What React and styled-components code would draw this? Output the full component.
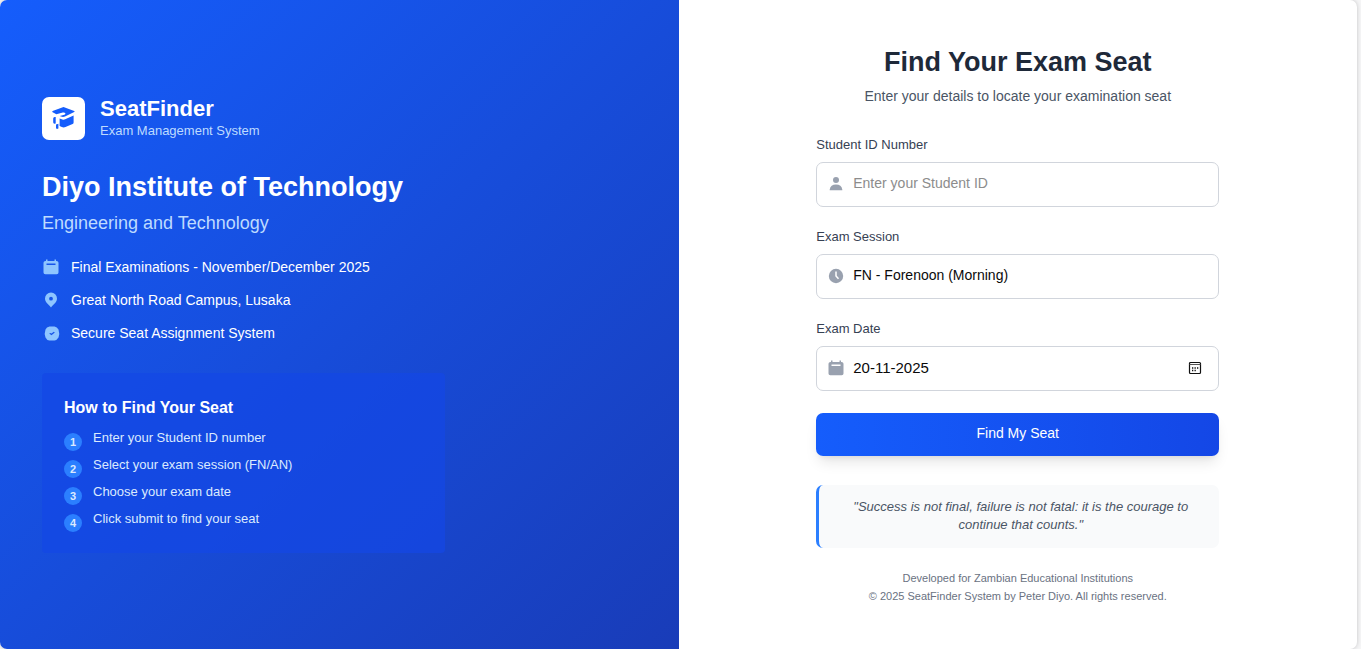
import React from "react";
import styled, { createGlobalStyle } from "styled-components";

const GlobalStyle = createGlobalStyle`
  *, *::before, *::after { box-sizing: border-box; }
  body {
    margin: 0;
    background: #f5f5f6;
    font-family: "Liberation Sans", Arial, sans-serif;
  }
  h1, h2, h3, p, ul, ol { margin: 0; padding: 0; }
  ul, ol { list-style: none; }
  button, input, select { font-family: inherit; }
`;

const Page = styled.main`
  min-height: 100vh;
  padding-right: 4px;
  display: grid;
`;

const Card = styled.div`
  display: grid;
  grid-template-columns: 1fr 1fr;
  background: #fff;
  border-radius: 7px;
  overflow: hidden;
  box-shadow: 0 0 4px rgba(0, 0, 0, 0.2);
  @media (max-width: 800px) {
    grid-template-columns: 1fr;
  }
`;

const BrandPanel = styled.section`
  display: flex;
  flex-direction: column;
  justify-content: center;
  padding: 42px;
  color: #fff;
  background: linear-gradient(to bottom right, #155dfc, #193cb8);
`;

const Brand = styled.div`
  display: flex;
  align-items: center;
  gap: 15px;
  margin-bottom: 28px;
`;

const LogoTile = styled.div`
  display: grid;
  place-items: center;
  width: 43px;
  height: 43px;
  border-radius: 7px;
  background: #fff;
  color: #155dfc;
`;

const BrandName = styled.h2`
  font-size: 22px;
  line-height: 25px;
`;

const BrandTagline = styled.p`
  font-size: 13px;
  line-height: 20px;
  color: #bedbff;
`;

const Institute = styled.h1`
  font-size: 27px;
  line-height: 36px;
  margin-bottom: 6px;
`;

const Department = styled.p`
  font-size: 18px;
  line-height: 25px;
  margin-bottom: 20px;
  color: #bedbff;
`;

const Facts = styled.ul`
  display: grid;
  gap: 11px;
  margin-bottom: 29px;
`;

const Fact = styled.li`
  display: flex;
  align-items: center;
  gap: 11px;
  font-size: 14px;
  line-height: 22px;
  svg { color: #8ec5ff; }
`;

const Guide = styled.div`
  max-width: 403px;
  padding: 22px 22px 25px;
  border-radius: 4px;
  background: rgba(20, 71, 230, 0.7);
`;

const GuideTitle = styled.h3`
  font-size: 16px;
  line-height: 25px;
  margin-bottom: 9px;
`;

const Steps = styled.ol`
  display: grid;
  gap: 9px;
`;

const Step = styled.li`
  display: flex;
  align-items: flex-start;
  gap: 11px;
  font-size: 13px;
  line-height: 18px;
  color: #dbeafe;
`;

const StepNumber = styled.span`
  width: 18px;
  height: 18px;
  margin: 4px 0 -4px;
  border-radius: 50%;
  background: #2b7fff;
  font-size: 11px;
  font-weight: bold;
  text-align: center;
`;

const FormPanel = styled.section`
  display: flex;
  flex-direction: column;
  align-items: center;
  justify-content: center;
  padding: 42px;
`;

const FormColumn = styled.div`
  width: 100%;
  max-width: 403px;
`;

const FormHeader = styled.header`
  margin-bottom: 28px;
  text-align: center;
`;

const FormTitle = styled.h2`
  font-size: 27px;
  line-height: 34px;
  margin-bottom: 6px;
  color: #1e2939;
`;

const FormSubtitle = styled.p`
  font-size: 14px;
  line-height: 22px;
  color: #4a5565;
`;

const Form = styled.form`
  display: grid;
  gap: 20px;
`;

const FieldLabel = styled.label`
  display: block;
  margin-bottom: 8px;
  font-size: 13px;
  line-height: 19px;
  color: #364153;
`;

const ControlBox = styled.div`
  display: flex;
  align-items: center;
  gap: 8px;
  height: 45px;
  padding: 0 10px;
  border: 1px solid #d1d5dc;
  border-radius: 7px;
  color: #99a1af;
  &:focus-within { border-color: #2b7fff; }
`;

const Control = styled.input`
  flex: 1;
  min-width: 0;
  height: 100%;
  padding: 0 0 2px;
  border: 0;
  outline: 0;
  appearance: none;
  background: transparent;
  font-size: ${(p) => p.$size || 14}px;
  color: #0a0a0a;
  &::placeholder { color: #8c8c8c; opacity: 1; }
`;

const PickerButton = styled.button`
  display: grid;
  padding: 0;
  margin-right: 6px;
  border: 0;
  background: none;
  color: #111;
  cursor: pointer;
`;

const SubmitButton = styled.button`
  height: 43px;
  margin-top: 2px;
  padding: 0 0 2px;
  border: 0;
  border-radius: 7px;
  background: linear-gradient(to right, #155dfc, #1447e6);
  box-shadow: 0 9px 14px -3px rgba(0, 0, 0, 0.1), 0 4px 6px -4px rgba(0, 0, 0, 0.1);
  color: #fff;
  font-size: 14px;
  cursor: pointer;
`;

const Quote = styled.p`
  margin: 29px 0 21px;
  padding: 13px 28px 14px 31px;
  border-left: 3px solid #2b7fff;
  border-radius: 7px;
  background: #f9fafb;
  color: #4a5565;
  font-size: 13px;
  font-style: italic;
  line-height: 18px;
  text-align: center;
`;

const Footer = styled.footer`
  font-size: 11px;
  line-height: 18px;
  color: #6a7282;
  text-align: center;
`;

const Icon = ({ size = 18, children }) => (
  <svg width={size} height={size} viewBox="0 0 18 18" fill="currentColor" aria-hidden="true">
    {children}
  </svg>
);

const CapIcon = () => (
  <svg width="25" height="25" viewBox="0 0 25 25" fill="currentColor" aria-hidden="true">
    <path d="M12.500 1 23.200 4.900Q24.200 5.500 23.200 6.100L14 10.600Q12 11.500 10 10.600L8.800 10 13.400 8.700Q15 8 14.200 6.900 13.400 6.200 11.800 6.600L5.400 8.300 1.600 6.300Q.8 5.600 1.600 5Z" />
    <path d="M8.600 12.500 11.400 13.500Q12.800 14 14.200 13.300L22.600 9.600V16.500Q22.600 17.600 21.600 18.100L14.500 21Q12.600 21.800 10.800 21L8.600 20Z" />
    <path d="M2.200 12.500Q2.200 11 3.700 11H4.700V17.500L3.400 17.800Q2.200 17.400 2.200 16.200ZM5 18.600 7.400 17.800V22.500L6 23 5 22.300Z" />
  </svg>
);

const CalendarIcon = () => (
  <Icon>
    <path fillRule="evenodd" d="M4 1.500h1.500V3h7V1.500H14V3h.5Q16.500 3 16.500 4.800v9.700q0 1.800-1.800 1.800H3.300q-1.800 0-1.800-1.800V4.800Q1.500 3 3.500 3H4ZM4.500 5.500V7h9V5.500Z" />
  </Icon>
);

const PinIcon = () => (
  <Icon>
    <path fillRule="evenodd" d="M9 1.500a6 6 0 0 1 6 6c0 4-4.200 6.500-6 9-1.800-2.500-6-5-6-9a6 6 0 0 1 6-6Zm0 4.300a1.900 1.900 0 1 0 0 3.800 1.900 1.900 0 0 0 0-3.800Z" />
  </Icon>
);

const CheckBadgeIcon = () => (
  <Icon>
    <path fillRule="evenodd" d="M7.500 2.500h5q2.500.5 4 3 1.500 4.500 0 8-1.500 2.500-4 3h-5q-3-.5-4-3-1.500-4 0-8 1-2.500 4-3ZM7.200 9.600 9.500 11.300 12.800 8.400 11.800 7.800 9.500 9.400 8.200 8.900Z" />
  </Icon>
);

const UserIcon = () => (
  <Icon>
    <circle cx="9" cy="5" r="3" />
    <path d="M2.700 15.300V14.500Q3.500 9.500 9 9.500t6.300 5v.8Z" />
  </Icon>
);

const ClockIcon = () => (
  <Icon>
    <circle cx="9" cy="9" r="7.200" />
    <path d="M9 4.500V9l2.500 2.800" fill="none" stroke="#fff" strokeWidth="1.500" />
  </Icon>
);

const PickerIcon = () => (
  <svg width="14" height="14" viewBox="0 0 14 14" aria-hidden="true">
    <rect x="1.500" y="1.500" width="11" height="11" rx="1" fill="none" stroke="currentColor" strokeWidth="1.200" />
    <path d="M1.500 3.500h11" stroke="#555" strokeWidth="1" />
    <path d="M4 7h1.300M6.500 7h1.300M9 7h1.300M4 9.500h1.300M6.500 9.500h1.300" stroke="currentColor" strokeWidth="1.400" />
  </svg>
);

const facts = [
  [CalendarIcon, "Final Examinations - November/December 2025"],
  [PinIcon, "Great North Road Campus, Lusaka"],
  [CheckBadgeIcon, "Secure Seat Assignment System"],
];

const steps = [
  "Enter your Student ID number",
  "Select your exam session (FN/AN)",
  "Choose your exam date",
  "Click submit to find your seat",
];

export default function App() {
  return (
    <>
      <GlobalStyle />
      <Page>
        <Card>
          <BrandPanel>
            <Brand>
              <LogoTile><CapIcon /></LogoTile>
              <div>
                <BrandName>SeatFinder</BrandName>
                <BrandTagline>Exam Management System</BrandTagline>
              </div>
            </Brand>
            <Institute>Diyo Institute of Technology</Institute>
            <Department>Engineering and Technology</Department>
            <Facts>
              {facts.map(([FactIcon, text]) => (
                <Fact key={text}><FactIcon />{text}</Fact>
              ))}
            </Facts>
            <Guide>
              <GuideTitle>How to Find Your Seat</GuideTitle>
              <Steps>
                {steps.map((text, i) => (
                  <Step key={text}><StepNumber>{i + 1}</StepNumber>{text}</Step>
                ))}
              </Steps>
            </Guide>
          </BrandPanel>
          <FormPanel>
            <FormColumn>
              <FormHeader>
                <FormTitle>Find Your Exam Seat</FormTitle>
                <FormSubtitle>Enter your details to locate your examination seat</FormSubtitle>
              </FormHeader>
              <Form onSubmit={(e) => e.preventDefault()}>
                <div>
                  <FieldLabel htmlFor="student">Student ID Number</FieldLabel>
                  <ControlBox>
                    <UserIcon />
                    <Control id="student" type="text" placeholder="Enter your Student ID" />
                  </ControlBox>
                </div>
                <div>
                  <FieldLabel htmlFor="session">Exam Session</FieldLabel>
                  <ControlBox>
                    <ClockIcon />
                    <Control as="select" id="session" defaultValue="FN">
                      <option value="FN">FN - Forenoon (Morning)</option>
                      <option value="AN">AN - Afternoon</option>
                    </Control>
                  </ControlBox>
                </div>
                <div>
                  <FieldLabel htmlFor="date">Exam Date</FieldLabel>
                  <ControlBox>
                    <CalendarIcon />
                    <Control id="date" type="text" defaultValue="20-11-2025" $size={15} />
                    <PickerButton type="button" aria-label="Choose date"><PickerIcon /></PickerButton>
                  </ControlBox>
                </div>
                <SubmitButton type="submit">Find My Seat</SubmitButton>
              </Form>
              <Quote>"Success is not final, failure is not fatal: it is the courage to continue that counts."</Quote>
              <Footer>
                <p>Developed for Zambian Educational Institutions</p>
                <p>© 2025 SeatFinder System by Peter Diyo. All rights reserved.</p>
              </Footer>
            </FormColumn>
          </FormPanel>
        </Card>
      </Page>
    </>
  );
}
